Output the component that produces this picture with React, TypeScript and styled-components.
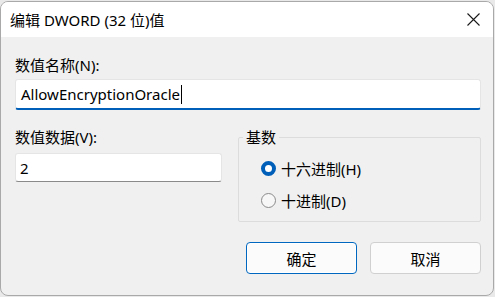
import React, { ReactElement } from 'react';
import styled, { createGlobalStyle } from 'styled-components';

const GlobalStyle = createGlobalStyle`
  html, body {
    margin: 0;
    padding: 0;
    background: #e9e9e9;
  }
  body {
    font-family: 'Noto Sans', 'Noto Sans CJK SC', sans-serif;
    font-size: 15px;
    color: #000;
  }
`;

const DialogWindow = styled.div`
  box-sizing: border-box;
  width: 494px;
  height: 295px;
  margin-top: 1px;
  display: flex;
  flex-direction: column;
  border: 1px solid #a9a9a9;
  border-radius: 8px;
  overflow: hidden;
  background: #f0f0f0;
`;

const TitleBar = styled.div`
  height: 35px;
  flex-shrink: 0;
  display: flex;
  align-items: center;
  justify-content: space-between;
  padding: 0 13px 0 9px;
  background: #ffffff;

  .title {
    font-size: 15px;
    line-height: 20px;
  }
`;

const Body = styled.div`
  flex: 1;
  display: flex;
  flex-direction: column;
  padding: 18px 12px 20px 14px;
`;

const Label = styled.div`
  line-height: 20px;
  height: 20px;
`;

const TextBox = styled.div<{ focused?: boolean }>`
  box-sizing: border-box;
  display: flex;
  align-items: center;
  background: #ffffff;
  border: 1px solid #e5e5e5;
  border-bottom: ${(p) => (p.focused ? '2px solid #005fb8' : '1px solid #8a8a8a')};
  border-radius: 3px;
  padding: 0 4px;
  line-height: 20px;

  .caret {
    display: inline-block;
    width: 1px;
    height: 19px;
    background: #000;
    margin-left: 1px;
  }
`;

const NameBox = styled(TextBox)`
  margin-top: 4px;
  height: 31px;
  padding-left: 5px;
`;

const DataBox = styled(TextBox)`
  margin-top: 6px;
  height: 29px;
  width: 207px;
`;

const Columns = styled.div`
  margin-top: 17px;
  display: grid;
  grid-template-columns: 208px 1fr;
  column-gap: 15px;
  align-items: start;
`;

const GroupBox = styled.fieldset`
  margin: 0;
  border: 1px solid #dcdcdc;
  border-radius: 2px;
  padding: 11px 10px 11px 22px;
  display: flex;
  flex-direction: column;
  gap: 12px;

  legend {
    padding: 0 3px;
    margin-left: -18px;
    line-height: 20px;
  }
`;

const RadioRow = styled.div`
  display: flex;
  align-items: center;
  gap: 5px;
  height: 20px;
`;

const RadioDot = styled.span<{ checked?: boolean }>`
  box-sizing: border-box;
  width: 15px;
  height: 15px;
  border-radius: 50%;
  background: ${(p) => (p.checked ? '#ffffff' : '#f7f7f7')};
  border: ${(p) => (p.checked ? '4px solid #005fb8' : '1px solid #8a8a8a')};
`;

const ButtonRow = styled.div`
  margin-top: 20px;
  display: flex;
  justify-content: flex-end;
  gap: 13px;
`;

const Button = styled.div<{ primary?: boolean }>`
  box-sizing: border-box;
  width: 111px;
  height: 32px;
  display: flex;
  align-items: center;
  justify-content: center;
  background: #fbfbfb;
  border: 1px solid ${(p) => (p.primary ? '#0067c0' : '#d0d0d0')};
  box-shadow: ${(p) => (p.primary ? 'inset 0 0 0 1px #ffffff' : 'none')};
  border-radius: 4px;
`;

function CloseIcon(): ReactElement {
  return (
    <svg width="13" height="13" viewBox="0 0 13 13">
      <path d="M0.5 0.5 L12.5 12.5 M12.5 0.5 L0.5 12.5" stroke="#1a1a1a" strokeWidth="1.1" />
    </svg>
  );
}

function App(): ReactElement {
  return (
    <>
      <GlobalStyle />
      <DialogWindow>
        <TitleBar>
          <span className="title">编辑 DWORD (32 位)值</span>
          <CloseIcon />
        </TitleBar>
        <Body>
          <Label>数值名称(N):</Label>
          <NameBox focused>
            AllowEncryptionOracle
            <span className="caret" />
          </NameBox>
          <Columns>
            <div>
              <Label>数值数据(V):</Label>
              <DataBox>2</DataBox>
            </div>
            <GroupBox>
              <legend>基数</legend>
              <RadioRow>
                <RadioDot checked />
                十六进制(H)
              </RadioRow>
              <RadioRow>
                <RadioDot />
                十进制(D)
              </RadioRow>
            </GroupBox>
          </Columns>
          <ButtonRow>
            <Button primary>确定</Button>
            <Button>取消</Button>
          </ButtonRow>
        </Body>
      </DialogWindow>
    </>
  );
}

export default App;
